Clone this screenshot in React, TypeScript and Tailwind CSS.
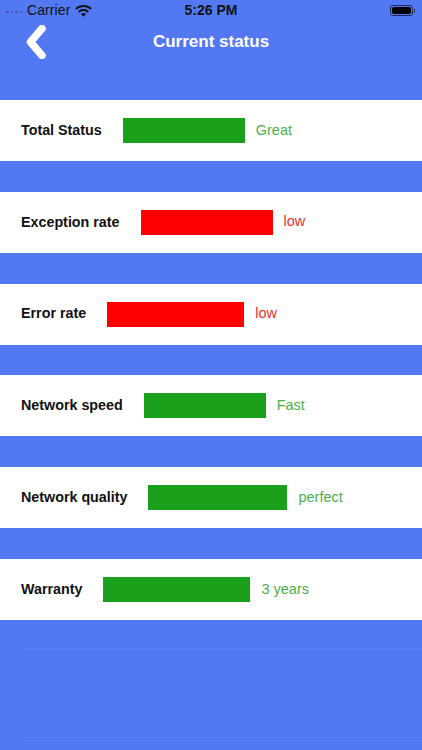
import React from "react";

type Row = { label: string; bar: number; value: string; good: boolean };

const rows: Row[] = [
  { label: "Total Status", bar: 122, value: "Great", good: true },
  { label: "Exception rate", bar: 132, value: "low", good: false },
  { label: "Error rate", bar: 137, value: "low", good: false },
  { label: "Network speed", bar: 122, value: "Fast", good: true },
  { label: "Network quality", bar: 139, value: "perfect", good: true },
  { label: "Warranty", bar: 147, value: "3 years", good: true },
];

function Wifi() {
  return (
    <svg width="17" height="12" viewBox="0 0 17 12" className="block">
      <path d="M8.5 0C5.3 0 2.4 1.2 0.3 3.2L1.8 4.8C3.5 3.1 5.9 2.1 8.5 2.1C11.1 2.1 13.5 3.1 15.2 4.8L16.7 3.2C14.6 1.2 11.7 0 8.5 0Z" fill="#111" />
      <path d="M8.5 4C6.4 4 4.5 4.8 3.1 6.2L4.6 7.7C5.6 6.7 7 6.1 8.5 6.1C10 6.1 11.4 6.7 12.4 7.7L13.9 6.2C12.5 4.8 10.6 4 8.5 4Z" fill="#111" />
      <path d="M8.5 8C7.5 8 6.6 8.4 6 9.1L8.5 11.7L11 9.1C10.4 8.4 9.5 8 8.5 8Z" fill="#111" />
    </svg>
  );
}

function Battery() {
  return (
    <div className="flex items-center">
      <div className="w-[23px] h-[11px] rounded-[3px] border border-[#1c2a55] p-[1px]">
        <div className="w-full h-full rounded-[2px] bg-black" />
      </div>
      <div className="w-[1.5px] h-[4px] bg-[#1c2a55] rounded-r-sm ml-[1px]" />
    </div>
  );
}

export default function App() {
  return (
    <div
      className="w-[422px] h-[750px] bg-[#5279f3] flex flex-col overflow-hidden"
      style={{ fontFamily: '"Liberation Sans", Arial, sans-serif' }}
    >
      {/* status bar */}
      <div className="h-[20px] flex items-center px-[6px] relative">
        <div className="flex items-center gap-[2px] mt-[4px]">
          {[0, 1, 2, 3].map((i) => (
            <div key={i} className="w-[2.5px] h-[2.5px] rounded-full bg-[#3a4f8c] opacity-70" />
          ))}
        </div>
        <span className="ml-[5px] text-[14px] text-[#111] font-medium tracking-[0.1px]">Carrier</span>
        <div className="ml-[5px] mt-[1px]">
          <Wifi />
        </div>
        <span className="absolute left-0 right-0 text-center text-[14px] font-bold text-[#111] pointer-events-none">
          5:26 PM
        </span>
        <div className="ml-auto mr-[1px] mt-[1px]">
          <Battery />
        </div>
      </div>

      {/* nav bar */}
      <div className="h-[44px] flex items-center relative">
        <div className="pl-[24px]">
          <svg width="24" height="34" viewBox="0 0 24 34" className="block">
            <path d="M18 3.5 L6.5 17 L18 30.5" stroke="#fff" strokeWidth="7.5" fill="none" strokeLinejoin="round" strokeLinecap="round" />
          </svg>
        </div>
        <span className="absolute left-0 right-0 text-center text-white text-[17px] font-bold pointer-events-none">
          Current status
        </span>
      </div>

      <div className="h-[36px] shrink-0" />

      <div className="flex flex-col gap-[30.8px]">
        {rows.map((r) => (
          <div key={r.label} className="h-[61px] shrink-0 bg-white flex items-center pl-[21px]">
            <span className="text-[14.3px] font-bold text-[#111]">{r.label}</span>
            <div
              className={`ml-[21px] h-[25px] ${r.good ? "bg-[#1ba01b]" : "bg-[#ff0000]"}`}
              style={{ width: r.bar }}
            />
            <span className={`ml-[11px] text-[14.5px] ${r.good ? "text-[#4caf4a]" : "text-[#e8302f]"}`}>
              {r.value}
            </span>
          </div>
        ))}
      </div>

      <div className="h-[29px] shrink-0" />
      <div className="ml-[20px] h-[1px] shrink-0 bg-[#5a80f4]" />
      <div className="h-[90px] shrink-0" />
      <div className="ml-[20px] h-[1px] shrink-0 bg-[#5a80f4]" />
    </div>
  );
}
